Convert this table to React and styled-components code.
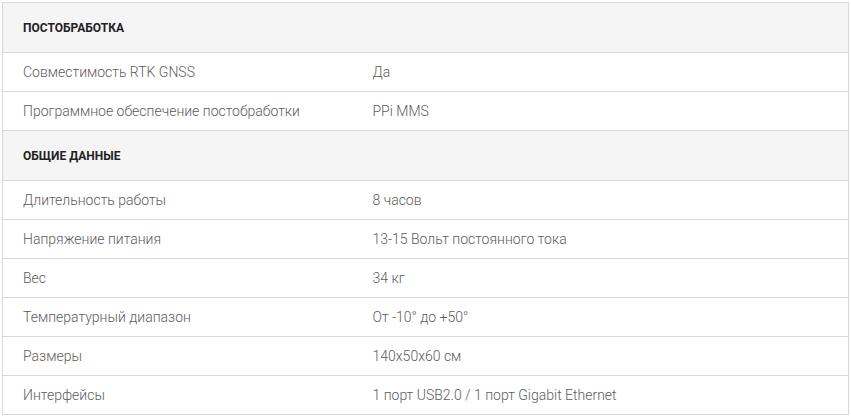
import React from 'react';
import styled, { createGlobalStyle } from 'styled-components';

const GlobalStyle = createGlobalStyle`
  html, body { margin: 0; padding: 0; background: #fff; }
  body { font-family: Roboto, 'Liberation Sans', sans-serif; }
`;

const Wrap = styled.div`
  padding: 2px 2px 0 2px;
`;

const Table = styled.table`
  width: 847px;
  border-collapse: collapse;
  border: 1px solid #d9d9d9;
  table-layout: fixed;
`;

const SectionRow = styled.tr`
  background: #f5f5f5;
  td {
    height: 49px;
    padding: 0 20px;
    font-size: 12px;
    font-weight: 700;
    color: #222;
    text-transform: uppercase;
    border-bottom: 1px solid #d9d9d9;
  }
`;

const DataRow = styled.tr`
  td {
    height: 38px;
    padding: 0 20px;
    font-size: 14px;
    font-weight: 300;
    color: #5c5c5c;
    border-bottom: 1px solid #d9d9d9;
    white-space: nowrap;
  }
`;

const sections = [
  {
    title: 'Постобработка',
    rows: [
      ['Совместимость RTK GNSS', 'Да'],
      ['Программное обеспечение постобработки', 'PPi MMS'],
    ],
  },
  {
    title: 'Общие данные',
    rows: [
      ['Длительность работы', '8 часов'],
      ['Напряжение питания', '13-15 Вольт постоянного тока'],
      ['Вес', '34 кг'],
      ['Температурный диапазон', 'От -10° до +50°'],
      ['Размеры', '140x50x60 см'],
      ['Интерфейсы', '1 порт USB2.0 / 1 порт Gigabit Ethernet'],
    ],
  },
];

export default function App() {
  return (
    <>
      <GlobalStyle />
      <Wrap>
        <Table>
          <colgroup>
            <col style={{ width: 350 }} />
            <col />
          </colgroup>
          <tbody>
            {sections.map((s) => (
              <React.Fragment key={s.title}>
                <SectionRow>
                  <td colSpan={2}>{s.title}</td>
                </SectionRow>
                {s.rows.map(([k, v]) => (
                  <DataRow key={k}>
                    <td>{k}</td>
                    <td>{v}</td>
                  </DataRow>
                ))}
              </React.Fragment>
            ))}
          </tbody>
        </Table>
      </Wrap>
    </>
  );
}
